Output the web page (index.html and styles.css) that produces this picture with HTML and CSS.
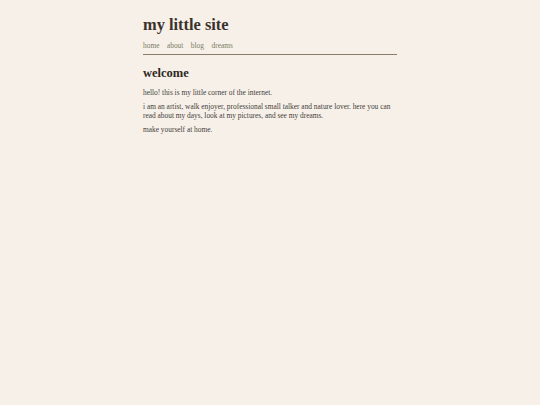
FILE: index.html
```html
<!DOCTYPE html>
<html>
<head>
<meta charset="utf-8">
<link rel="stylesheet" href="styles.css">
</head>
<body>
<div class="page">
  <header class="header">
    <h1 class="title">my little site</h1>
    <nav class="nav">
      <a href="#">home</a>
      <a href="#">about</a>
      <a href="#">blog</a>
      <a href="#">dreams</a>
    </nav>
  </header>
  <main class="content">
    <h2 class="heading">welcome</h2>
    <p>hello! this is my little corner of the internet.</p>
    <p>i am an artist, walk enjoyer, professional small talker and nature lover. here you can read about my days, look at my pictures, and see my dreams.</p>
    <p>make yourself at home.</p>
  </main>
</div>
</body>
</html>
```

FILE: styles.css
```css
html, body {
  margin: 0;
  padding: 0;
  background: #f6f0e9;
}
body {
  font-family: "Liberation Serif", "DejaVu Serif", serif;
  color: #45403a;
  font-size: 7.4px;
  line-height: 8.5px;
}
.page {
  width: 254px;
  margin: 0 auto;
  padding-top: 15px;
}
.title {
  font-size: 16.4px;
  line-height: 20px;
  margin: 0;
  font-weight: bold;
  color: #3a322b;
}
.nav {
  display: flex;
  gap: 7.5px;
  padding: 7px 0 3px;
  border-bottom: 1px solid #8c7b66;
}
.nav a {
  color: #7d7c62;
  text-decoration: none;
}
.content {
  padding-top: 11px;
}
.heading {
  font-size: 12.5px;
  line-height: 14px;
  margin: 0 0 9px;
  font-weight: bold;
  color: #2e2822;
}
.content p {
  margin: 0 0 6px;
}
```
